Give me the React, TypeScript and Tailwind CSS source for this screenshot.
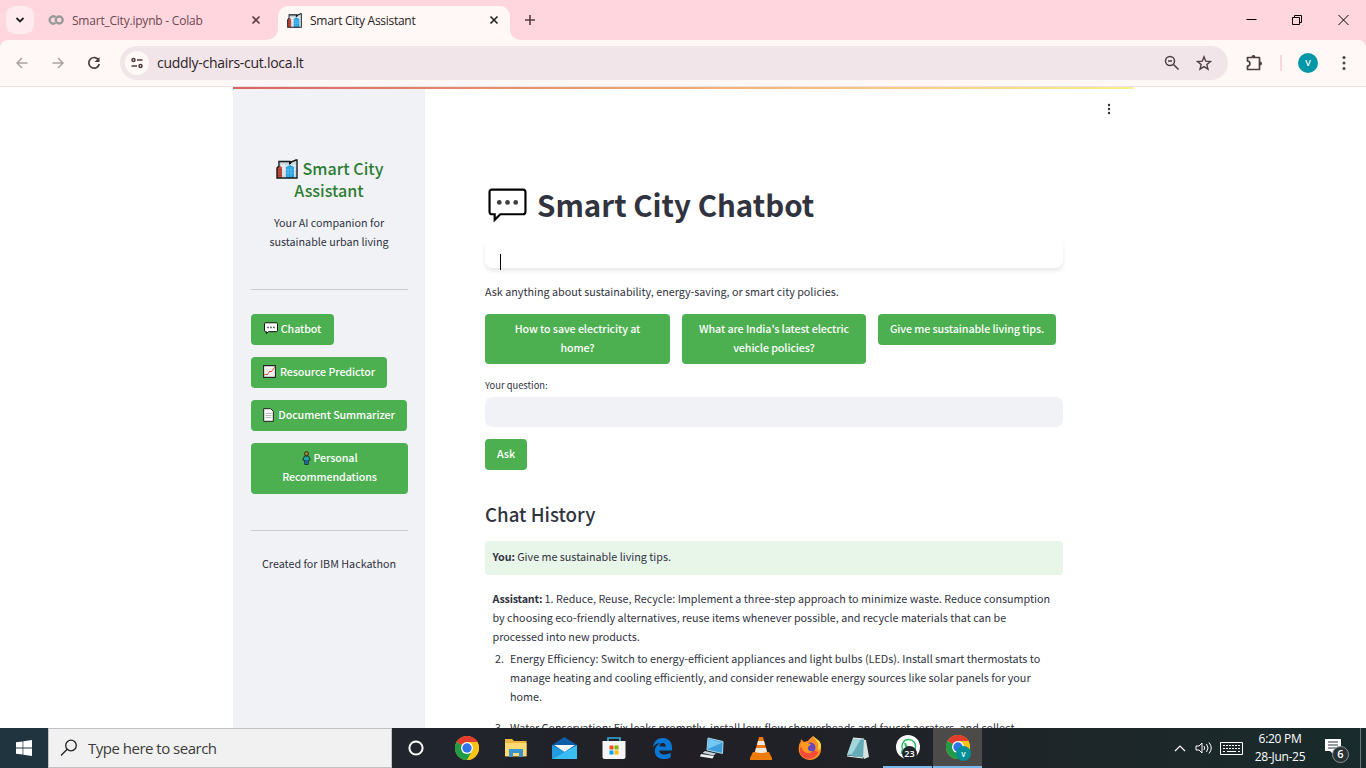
import React, { ReactNode } from "react";

const SANS = "font-['Noto_Sans_CJK_SC',sans-serif]";
const UI = "font-['Open_Sans','Noto_Sans',sans-serif]";

function CityIcon({ className }: { className: string }) {
  return (
    <svg viewBox="0 0 22 20" className={className} preserveAspectRatio="none">
      <path d="M4 3h10l2-1 4-1v17H4z" fill="#c7d5dc" />
      <path d="M6 5v12M8 5v12M15 4v12M18 4v12M5 7h15M5 10h15" stroke="#f4fbfd" strokeWidth=".8" />
      <path d="M1 19V9c0-1 1-2 2.500-2S6 8 6 9v10z" fill="#c84c3c" />
      <path d="M1 11h5M1 14h5M1 16.500h5" stroke="#7c302b" strokeWidth=".6" />
      <path d="M10 19V8l4-2 4 2v11z" fill="#269fdf" />
      <path d="M12 8v10M15 8v10M10 11h8M10 14h8" stroke="#67c5f4" strokeWidth=".7" />
      <path d="M1 19V9l2-2V2.500h11V5l1-2 5-2h1v18z" fill="none" stroke="#14191c" strokeWidth="1.4" />
      <path d="M13 3v3l3-3z" fill="#111" />
    </svg>
  );
}

function Chat({ className, fill = "none", sw = 1.8 }: { className: string; fill?: string; sw?: number }) {
  return (
    <svg viewBox="0 0 38 34" className={className}>
      <path d="M4 1.500h30q2.500 0 2.500 2.500v19q0 2.500-2.500 2.500H12L6.500 31v-5.500H4q-2.500 0-2.500-2.500V4Q1.500 1.500 4 1.500z" fill={fill} stroke="#000" strokeWidth={sw} />
      <g fill="#3f3f3f"><circle cx="11" cy="14" r="2.300" /><circle cx="19" cy="14" r="2.300" /><circle cx="27" cy="14" r="2.300" /></g>
    </svg>
  );
}

function ChartIcon() {
  return (
    <svg viewBox="0 0 13 13" className="h-[13px] w-[13px] shrink-0">
      <path d="M.6.6h11.800v11.800H.6z" fill="#fff" stroke="#222" strokeWidth="1.100" />
      <path d="M4 1v11M7 1v11M10 1v11M1 4h11M1 7h11M1 10h11" stroke="#ccc" strokeWidth=".5" />
      <path d="M1 10l2-1 1 1 3-4 1 1 4-5" fill="none" stroke="#e2473a" />
    </svg>
  );
}

function DocIcon() {
  return (
    <svg viewBox="0 0 11 14" className="h-[14px] w-[11px] shrink-0">
      <path d="M.7.7h7l2.600 2.600v10H.7z" fill="#fff" stroke="#222" />
      <path d="M2.500 5.500h6M2.500 7.500h6M2.500 9.500h6" stroke="#aaa" strokeWidth=".8" />
    </svg>
  );
}

function PersonIcon() {
  return (
    <svg viewBox="0 0 9 14" className="h-[14px] w-[9px] shrink-0">
      <path d="M2.500 5L.8 9l2 .6V13.400h3.400V9.600l2-.6-1.700-4z" fill="#20a7a0" stroke="#222" strokeWidth=".9" />
      <path d="M3 9h3v4H3z" fill="#1c62a5" />
      <circle cx="4.500" cy="2.700" r="2" fill="#ae8427" stroke="#222" strokeWidth=".9" />
    </svg>
  );
}

function Button({ children, className = "" }: { children: ReactNode; className?: string }) {
  return (
    <button className={`flex flex-col items-center rounded-[4px] bg-[#4caf50] px-3 pt-[5px] text-[10.7px] leading-[19px] font-medium tracking-[-0.09px] whitespace-nowrap text-white ${className}`}>
      {children}
    </button>
  );
}

function Close({ className = "" }: { className?: string }) {
  return (
    <svg viewBox="0 0 10 10" className={`h-[10px] w-[10px] ${className}`}>
      <path d="M1.500 1.500l7 7M8.500 1.500l-7 7" stroke="currentColor" strokeWidth="1.600" />
    </svg>
  );
}

function ChromeLogo() {
  return (
    <svg viewBox="0 0 24 24" className="h-6 w-6">
      <circle cx="12" cy="12" r="12" fill="#fbc116" />
      <path d="M12 12L1.600 6A12 12 0 0 1 22.400 6z" fill="#e33b2e" />
      <path d="M1.600 6A12 12 0 0 0 12 24l5.200-9L12 12z" fill="#229b48" />
      <path d="M12 6h10.400A12 12 0 0 1 12 24l5.200-9z" fill="#fbc116" />
      <circle cx="12" cy="12" r="6" fill="#fff" />
      <circle cx="12" cy="12" r="4.700" fill="#2f75e8" />
    </svg>
  );
}

function TabStrip() {
  return (
    <div className="flex h-10 bg-[#ffd6de]">
      <div className="mt-[6px] ml-[6px] flex h-7 w-7 items-center justify-center rounded-[9px] bg-[#ffebef]">
        <svg viewBox="0 0 10 8" className="h-2 w-[10px]"><path d="M1.500 2L5 5.500 8.500 2" fill="none" stroke="#222" strokeWidth="1.800" /></svg>
      </div>
      <div className="mt-[6px] flex h-7 w-[230px] items-center pl-[14px]">
        <svg viewBox="0 0 16 10" className="h-[10px] w-4 shrink-0"><g fill="none" stroke="#999" strokeWidth="2.300"><path d="M7.500 2.100a3.600 3.600 0 1 0 0 5.800" /><circle cx="11.200" cy="5" r="3.500" /></g></svg>
        <span className="ml-2 w-[170px] shrink-0 pt-[1px] text-[12px] tracking-[-0.22px] whitespace-nowrap text-[#6b4850]">Smart_City.ipynb - Colab</span>
        <Close className="ml-[9px] shrink-0 text-[#5b3c44]" />
      </div>
      <div className="mt-[6px] flex h-[34px] w-[258px] items-end">
        <svg viewBox="0 0 14 12" className="h-3 w-[14px] shrink-0"><path d="M0 12q14 0 14-12v12z" fill="#fff8f6" /></svg>
        <div className="flex h-[34px] w-[232px] shrink-0 items-center rounded-t-[10px] bg-[#fff8f6] pb-[6px] pl-[9px]">
          <CityIcon className="h-[15px] w-[15px] shrink-0" />
          <span className="ml-2 w-[179px] shrink-0 pt-[1px] text-[12px] tracking-[-0.28px] whitespace-nowrap text-[#2a2023]">Smart City Assistant</span>
          <Close className="shrink-0 text-[#222]" />
        </div>
        <svg viewBox="0 0 12 12" className="h-3 w-3 shrink-0"><path d="M0 12V0q0 12 12 12z" fill="#fff8f6" /></svg>
      </div>
      <svg viewBox="0 0 12 12" className="mt-[14px] ml-[2px] h-3 w-3"><path d="M6 1v10M1 6h10" stroke="#5b3c44" strokeWidth="1.600" /></svg>
      <div className="mt-[14px] mr-[17px] ml-auto flex gap-[35px]">
        <svg viewBox="0 0 11 12" className="h-3 w-[11px]"><path d="M.5 5.500h10" stroke="#000" /></svg>
        <svg viewBox="0 0 11 12" className="h-3 w-[11px]"><path d="M.5 3.500h7v7h-7zM2.500 3.500v-2h7v7h-2" fill="none" stroke="#000" /></svg>
        <svg viewBox="0 0 11 12" className="h-3 w-[11px]"><path d="M.5 1l10 10M10.500 1l-10 10" stroke="#000" /></svg>
      </div>
    </div>
  );
}

function Toolbar() {
  return (
    <div className="bg-[#ffd6de]">
      <div className="flex h-[47px] items-center rounded-t-[8px] border-b border-[#eadfe1] bg-[#fff8f6]">
        <svg viewBox="0 0 12 12" className="ml-4 h-3 w-3"><path d="M11.500 6H1M6 1L1 6l5 5" fill="none" stroke="#aaa1a2" strokeWidth="1.500" /></svg>
        <svg viewBox="0 0 12 12" className="ml-6 h-3 w-3"><path d="M.5 6H11M6 1l5 5-5 5" fill="none" stroke="#aaa1a2" strokeWidth="1.500" /></svg>
        <svg viewBox="0 0 14 14" className="ml-[23px] h-[14px] w-[14px]"><path d="M11.800 4.300A5.300 5.300 0 1 0 12.300 8" fill="none" stroke="#4f3e42" strokeWidth="1.700" /><path d="M12.500 1v5h-5z" fill="#4f3e42" /></svg>
        <div className="ml-[19px] flex h-[34px] w-[1108px] items-center rounded-full bg-[#f1e5ea] pl-[5px]">
          <div className="flex h-[24px] w-[24px] items-center justify-center rounded-full bg-[#fff8f6]">
            <svg viewBox="0 0 12 12" className="h-3 w-3"><g fill="none" stroke="#4f3e42" strokeWidth="1.500"><circle cx="2.500" cy="3" r="1.500" /><circle cx="9.500" cy="9" r="1.500" /><path d="M6 3h5.500M.5 9H6" /></g></svg>
          </div>
          <span className="ml-[8px] w-[1007px] pb-[1px] text-[14px] tracking-[-0.28px] text-[#2c2326]">cuddly-chairs-cut.loca.lt</span>
          <svg viewBox="0 0 16 16" className="h-4 w-4 shrink-0"><g fill="none" stroke="#4f3e42" strokeWidth="1.500"><circle cx="6" cy="6" r="4.500" /><path d="M9.500 9.500l5 5M4 6h4" /></g></svg>
          <svg viewBox="0 0 16 16" className="ml-[16px] h-4 w-4 shrink-0"><path d="M8 1.800l1.750 4.400 4.700.35-3.600 3 1.150 4.650-4-2.500-4 2.500 1.150-4.650-3.600-3 4.700-.35z" fill="none" stroke="#4f3e42" strokeWidth="1.400" /></svg>
        </div>
        <svg viewBox="0 0 17 17" className="ml-[18px] h-[17px] w-[17px]"><path d="M1.500 2.500h12v12h-12V11c3.200 0 3.200-5 0-5z" fill="none" stroke="#4f3e42" strokeWidth="1.700" strokeLinejoin="round" /><path d="M5.500 2a2 2 0 0 1 4 0zM14 6.500a2 2 0 0 1 0 4z" fill="#4f3e42" /></svg>
        <div className="ml-[17px] h-4 w-[2px] bg-[#ffd6de]" />
        <div className="ml-[16px] flex h-5 w-5 items-center justify-center rounded-full bg-[#0097a7] text-[9px] font-semibold text-white">V</div>
        <svg viewBox="0 0 4 16" className="ml-[24px] h-4 w-1"><g fill="#4f3e42"><circle cx="2" cy="2.500" r="1.500" /><circle cx="2" cy="8" r="1.500" /><circle cx="2" cy="13.500" r="1.500" /></g></svg>
      </div>
    </div>
  );
}

function Sidebar() {
  return (
    <aside className="flex w-[192px] shrink-0 flex-col bg-[#f0f2f6] pt-[68px] pr-[17px] pl-[18px]">
      <h2 className="flex h-11 shrink-0 flex-col items-center text-[16.100px] leading-[22px] font-medium whitespace-nowrap text-[#2e7d32]">
        <span className="flex items-center"><CityIcon className="mt-[1px] mr-[5px] h-[20px] w-[22px]" />Smart City</span>
        <span className="pr-[1px]">Assistant</span>
      </h2>
      <p className="mt-3 h-[38px] shrink-0 pr-[1px] text-center text-[10.75px] leading-[19px]">Your AI companion for<br />sustainable urban living</p>
      <div className="mt-[38px] h-px shrink-0 bg-[#c9cbd0]" />
      <nav className="mt-6 flex flex-col items-start gap-3">
        <Button className="h-[31px] w-[83px]"><span className="flex items-center gap-[3px]"><Chat className="h-[13px] w-[14px]" fill="#fff" sw={2.500} />Chatbot</span></Button>
        <Button className="h-[31px] w-[136px]"><span className="flex items-center gap-1"><ChartIcon />Resource Predictor</span></Button>
        <Button className="h-[31px] w-[156px]"><span className="flex items-center gap-1"><DocIcon />Document Summarizer</span></Button>
        <Button className="h-[51px] w-[157px]"><span className="flex items-center gap-[3px]"><PersonIcon />Personal</span><span>Recommendations</span></Button>
      </nav>
      <div className="mt-[36px] h-px shrink-0 bg-[#c9cbd0]" />
      <p className="mt-[23px] pr-[1px] text-center text-[10.75px] leading-[19.2px] whitespace-nowrap">Created for IBM Hackathon</p>
    </aside>
  );
}

function Main() {
  return (
    <main className="flex w-[708px] shrink-0 flex-col pl-[60px]">
      <div className="mr-[22px] flex h-[90px] shrink-0 justify-end pt-[14px]">
        <svg viewBox="0 0 4 12" className="h-3 w-1"><g fill="#31333f"><circle cx="2" cy="2" r="1.200" /><circle cx="2" cy="6" r="1.200" /><circle cx="2" cy="10" r="1.200" /></g></svg>
      </div>
      <h1 className="flex h-[50px] shrink-0 items-center pl-[3px] text-[29.500px] leading-[38px] font-bold whitespace-nowrap text-[#31333f]">
        <Chat className="mt-[3px] mr-[10px] h-[35px] w-[39px]" sw={2.100} /><span className="-mt-[1px]">Smart City Chatbot</span>
      </h1>
      <div className="mt-[9px] flex h-[30px] w-[578px] shrink-0 items-end rounded-[8px] bg-white pl-[15px] shadow-[0_3px_4px_rgba(0,0,0,0.09)]">
        <div className="-mb-[2px] h-4 w-px bg-black" />
      </div>
      <p className="mt-[14px] h-[19px] shrink-0 text-[10.76px] leading-[19px]">Ask anything about sustainability, energy-saving, or smart city policies.</p>
      <div className="mt-[13px] flex h-[50px] shrink-0 gap-3">
        <Button className="h-[50px] w-[185px]"><span>How to save electricity at</span><span>home?</span></Button>
        <Button className="h-[50px] w-[184px]"><span>What are India's latest electric</span><span>vehicle policies?</span></Button>
        <Button className="h-[31px] w-[178px]"><span>Give me sustainable living tips.</span></Button>
      </div>
      <label className="mt-[13px] h-[17px] shrink-0 text-[9.400px] leading-[17px]">Your question:</label>
      <div className="mt-[3px] h-[30px] w-[578px] shrink-0 rounded-[7px] bg-[#f0f2f6]" />
      <Button className="mt-3 h-[31px] w-[42px] shrink-0">Ask</Button>
      <h3 className="mt-[30px] h-[28px] shrink-0 text-[18.700px] leading-[28px] font-medium">Chat History</h3>
      <div className="mt-[13px] h-[34px] w-[578px] shrink-0 rounded-[4px] bg-[#e8f5e9] pt-[6px] pl-[7.500px] text-[10.76px] leading-[19.2px]"><b className="tracking-[-0.1px]">You:</b> Give me sustainable living tips.</div>
      <div className="mt-[14px] shrink-0 pl-[7.500px] text-[10.76px] leading-[19px] whitespace-nowrap">
        <p><b className="tracking-[-0.2px]">Assistant:</b> 1. Reduce, Reuse, Recycle: Implement a three-step approach to minimize waste. Reduce consumption<br />by choosing eco-friendly alternatives, reuse items whenever possible, and recycle materials that can be<br />processed into new products.</p>
        <ol className="mt-[3px] flex flex-col gap-[12px] pl-[2.500px]">
          <li className="flex"><span className="w-[15px] shrink-0">2.</span><span>Energy Efficiency: Switch to energy-efficient appliances and light bulbs (LEDs). Install smart thermostats to<br />manage heating and cooling efficiently, and consider renewable energy sources like solar panels for your<br />home.</span></li>
          <li className="flex"><span className="w-[15px] shrink-0">3.</span><span>Water Conservation: Fix leaks promptly, install low-flow showerheads and faucet aerators, and collect</span></li>
        </ol>
      </div>
    </main>
  );
}

function Slot({ children, className = "" }: { children: ReactNode; className?: string }) {
  return <div className={`relative flex h-10 w-[49px] shrink-0 items-center justify-center ${className}`}>{children}</div>;
}

function Taskbar() {
  return (
    <div className="flex h-10 bg-linear-to-r from-[#1f303c] via-[#211f25] via-50% to-[#192b2c] text-white">
      <div className="flex w-12 items-center justify-center bg-[#203440]">
        <svg viewBox="0 0 16 16" className="h-4 w-4" fill="#fff"><path d="M0 2.300l6.600-.9v6.200H0zM7.300 1.300L16 0v7.600H7.300zM0 8.400h6.600v6.200L0 13.700zM7.300 8.400H16V16l-8.700-1.200z" /></svg>
      </div>
      <div className="flex w-[344px] items-center border border-[#bfc3c7] bg-[#f1f1f1] pl-[11px]">
        <svg viewBox="0 0 18 18" className="h-[18px] w-[18px]"><g fill="none" stroke="#222" strokeWidth="1.300"><circle cx="11" cy="6.500" r="5.300" /><path d="M7.200 10.300L1 16.500" /></g></svg>
        <span className="ml-[10px] text-[15px] tracking-[-0.5px] text-[#3b3b3b]">Type here to search</span>
      </div>
      <Slot className="pr-[2px]"><svg viewBox="0 0 16 16" className="h-4 w-4"><circle cx="8" cy="8" r="6.600" fill="none" stroke="#fff" strokeWidth="2" /></svg></Slot>
      <Slot className="pl-[3px]"><ChromeLogo /></Slot>
      <Slot className="pl-[2px]"><svg viewBox="0 0 22 20" className="h-5 w-[22px]"><path d="M0 1h7l2 2h12.500v15.500H0z" fill="#eeb73e" /><path d="M0 5h21.500v13H0z" fill="#ffda72" /><path d="M4 19v-8h14v8h-4v-4H8v4z" fill="#3a94d0" /></svg></Slot>
      <Slot className="pl-[2px]"><svg viewBox="0 0 25 22" className="h-[22px] w-[25px]"><path d="M0 8L12.500 0 25 8v14H0z" fill="#0c5ca8" /><path d="M2 8h21l-10.500 7z" fill="#f3f5f7" /><path d="M0 8l12.500 7L0 22z" fill="#229be0" /><path d="M25 8v14H0z" fill="#39bdf3" /></svg></Slot>
      <Slot className="pl-[2px]"><svg viewBox="0 0 24 24" className="h-6 w-6"><path d="M6 6V2h12v4" fill="none" stroke="#36a9da" strokeWidth="1.700" /><path d="M.5 5h23v16q0 2-2 2h-19q-2 0-2-2z" fill="#f5f5f5" /><path d="M7.500 9.500h4v4h-4z" fill="#f25022" /><path d="M12.500 9.500h4v4h-4z" fill="#7fba00" /><path d="M7.500 14.500h4v4h-4z" fill="#00a4ef" /><path d="M12.500 14.500h4v4h-4z" fill="#ffb900" /></svg></Slot>
      <Slot className="pl-[2px]"><svg viewBox="0 0 24 24" className="h-[23px] w-[23px]"><path d="M2 11C3 4 7 1 12 1c7 0 10 5 10 10v3H8.500c.3 4.600 7 5.600 12 2.500v4.800C13 25 3.700 22.500 4 14.500 4.100 10.500 7 7.500 10 6.300 5.500 6.700 3 8.700 2 11zm6.700-1.200h6.700C15.300 5 9.300 5.300 8.700 9.800z" fill="#0878d4" fillRule="evenodd" /></svg></Slot>
      <Slot className="pl-[2px]"><svg viewBox="0 0 24 24" className="h-6 w-6"><path d="M8 2l15 3.500-.5 12L7 14z" fill="#3d9cda" stroke="#a7d9f1" /><path d="M8.500 3l14 3.500L8 13z" fill="#75c8f2" /><path d="M5 15l11 2.500-2.500 2L2.500 17z" fill="#c8d4dc" /><path d="M1 18l13 2-1.500 2.500L0 20.500z" fill="#edf2f4" /></svg></Slot>
      <Slot className="pl-[2px]"><svg viewBox="0 0 22 24" className="h-6 w-[22px]"><path d="M3 16h16l3 6v2H0v-2z" fill="#ed7c08" /><path d="M9 1h4l5 18q-7 3-14 0z" fill="#ef7b0d" /><path d="M8 5h6l1 4H7zM6 12h10l1 4q-6 2-12 0z" fill="#eee8df" /></svg></Slot>
      <Slot className="pl-[2px]"><svg viewBox="0 0 24 24" className="h-6 w-6"><path d="M3 3l3 3c2-1 3-1 4-1 1-2 3-3 5-5 1 3 7 4 8 11 1 8-5 13-11 13S-1 19 1 10c0-3 2-3 2-7z" fill="#ff8c22" /><path d="M15 0c1 4 7 5 5 14l2-1c2-3 1-7-2-9z" fill="#ffdc3e" /><path d="M2 12c4-3 7 4 12 2l6 2c-2 8-15 10-18 0z" fill="#f44b3b" /><circle cx="12.500" cy="11.500" r="5" fill="#6947bd" /><path d="M3 7c5-2 7 1 10 1l-3 3c-1 3 2 5 5 4-3 4-10 2-11-3z" fill="#ff9a1f" /></svg></Slot>
      <Slot><svg viewBox="0 0 23 24" className="h-6 w-[23px]"><path d="M9 2l11 2 3 17-5 2z" fill="#d9e2df" /><path d="M7 2l11 1-1 19L1 19z" fill="#64adb8" /><path d="M7 2l8 1-9 15-5 1z" fill="#a4d5dc" /><path d="M7 2l11 1M1 20l16 2" stroke="#e8f1f1" strokeWidth="1.200" /></svg></Slot>
      <div className="flex w-[51px] shrink-0 justify-center">
        <Slot className="w-[40px] border-b-2 border-[#76b9ed]">
          <svg viewBox="0 0 24 24" className="h-6 w-6"><circle cx="12" cy="12" r="12" fill="#fff" /><path d="M5.500 18l1-4A6.800 6.800 0 1 1 9 17z" fill="none" stroke="#2abf62" strokeWidth="1.400" /><path d="M9 8l1 3 3 3 3 1" fill="none" stroke="#2abf62" strokeWidth="2" /></svg>
          <span className="absolute top-[18px] left-[19px] flex h-[15px] w-[15px] items-center justify-center rounded-full bg-[#20252a] text-[9px] font-semibold">23</span>
        </Slot>
      </div>
      <Slot className="w-[48px] border-b-2 border-[#76b9ed] bg-[#4d4a4a]">
        <ChromeLogo />
        <span className="absolute top-[18px] left-[23px] flex h-[15px] w-[15px] items-center justify-center rounded-full bg-[#008f98] text-[8px] font-semibold">v</span>
      </Slot>
      <div className="ml-auto flex h-10 items-center">
        <svg viewBox="0 0 12 8" className="h-2 w-3"><path d="M1 7l5-5 5 5" fill="none" stroke="#fff" strokeWidth="1.200" /></svg>
        <svg viewBox="0 0 18 14" className="ml-[9px] h-[14px] w-[18px]"><g fill="none" stroke="#fff"><path d="M1 5h3l3-3v10L4 9H1zM9 5q1.500 2 0 4M11.500 3q3 4 0 8M14 1.500q4.500 5.500 0 11" /></g></svg>
        <svg viewBox="0 0 23 13" className="ml-[7px] h-[13px] w-[23px]"><path d="M.5.5h22v12H.5z" fill="none" stroke="#fff" /><path d="M3 3.500h17M3 6.500h17" stroke="#fff" strokeDasharray="2 1" /><path d="M3 9.500h2m2 0h9m2 0h2" stroke="#fff" /></svg>
        <div className="ml-[7px] w-[60px] text-center text-[12px] leading-[18px] tracking-[-0.3px] whitespace-nowrap">6:20 PM<br />28-Jun-25</div>
        <div className="relative ml-[14px] h-[24px] w-[26px]">
          <svg viewBox="0 0 16 18" className="mt-[2px] ml-[1px] h-[18px] w-4"><path d="M0 1h16v12h-7v4l-4-4H0z" fill="#fff" /><path d="M3 4h10M3 7h10M3 10h8" stroke="#2e3a3d" /></svg>
          <span className="absolute top-[10px] left-[8px] flex h-[17px] w-[17px] items-center justify-center rounded-full border border-[#8c9294] bg-[#293234] text-[11px] font-semibold">6</span>
        </div>
        <div className="ml-[10px] h-10 w-px bg-[#6a7475]" />
        <div className="w-[5px]" />
      </div>
    </div>
  );
}

export default function App() {
  return (
    <div className={`flex h-[768px] w-[1366px] flex-col overflow-hidden bg-white ${UI}`}>
      <TabStrip />
      <Toolbar />
      <div className={`flex h-[641px] flex-col overflow-hidden pl-[233px] text-[#31333f] ${SANS}`}>
        <div className="h-[2px] w-[900px] shrink-0 bg-linear-to-r from-[#dc6263] to-[#fbf08b]" />
        <div className="flex h-[639px]"><Sidebar /><Main /></div>
      </div>
      <Taskbar />
    </div>
  );
}
